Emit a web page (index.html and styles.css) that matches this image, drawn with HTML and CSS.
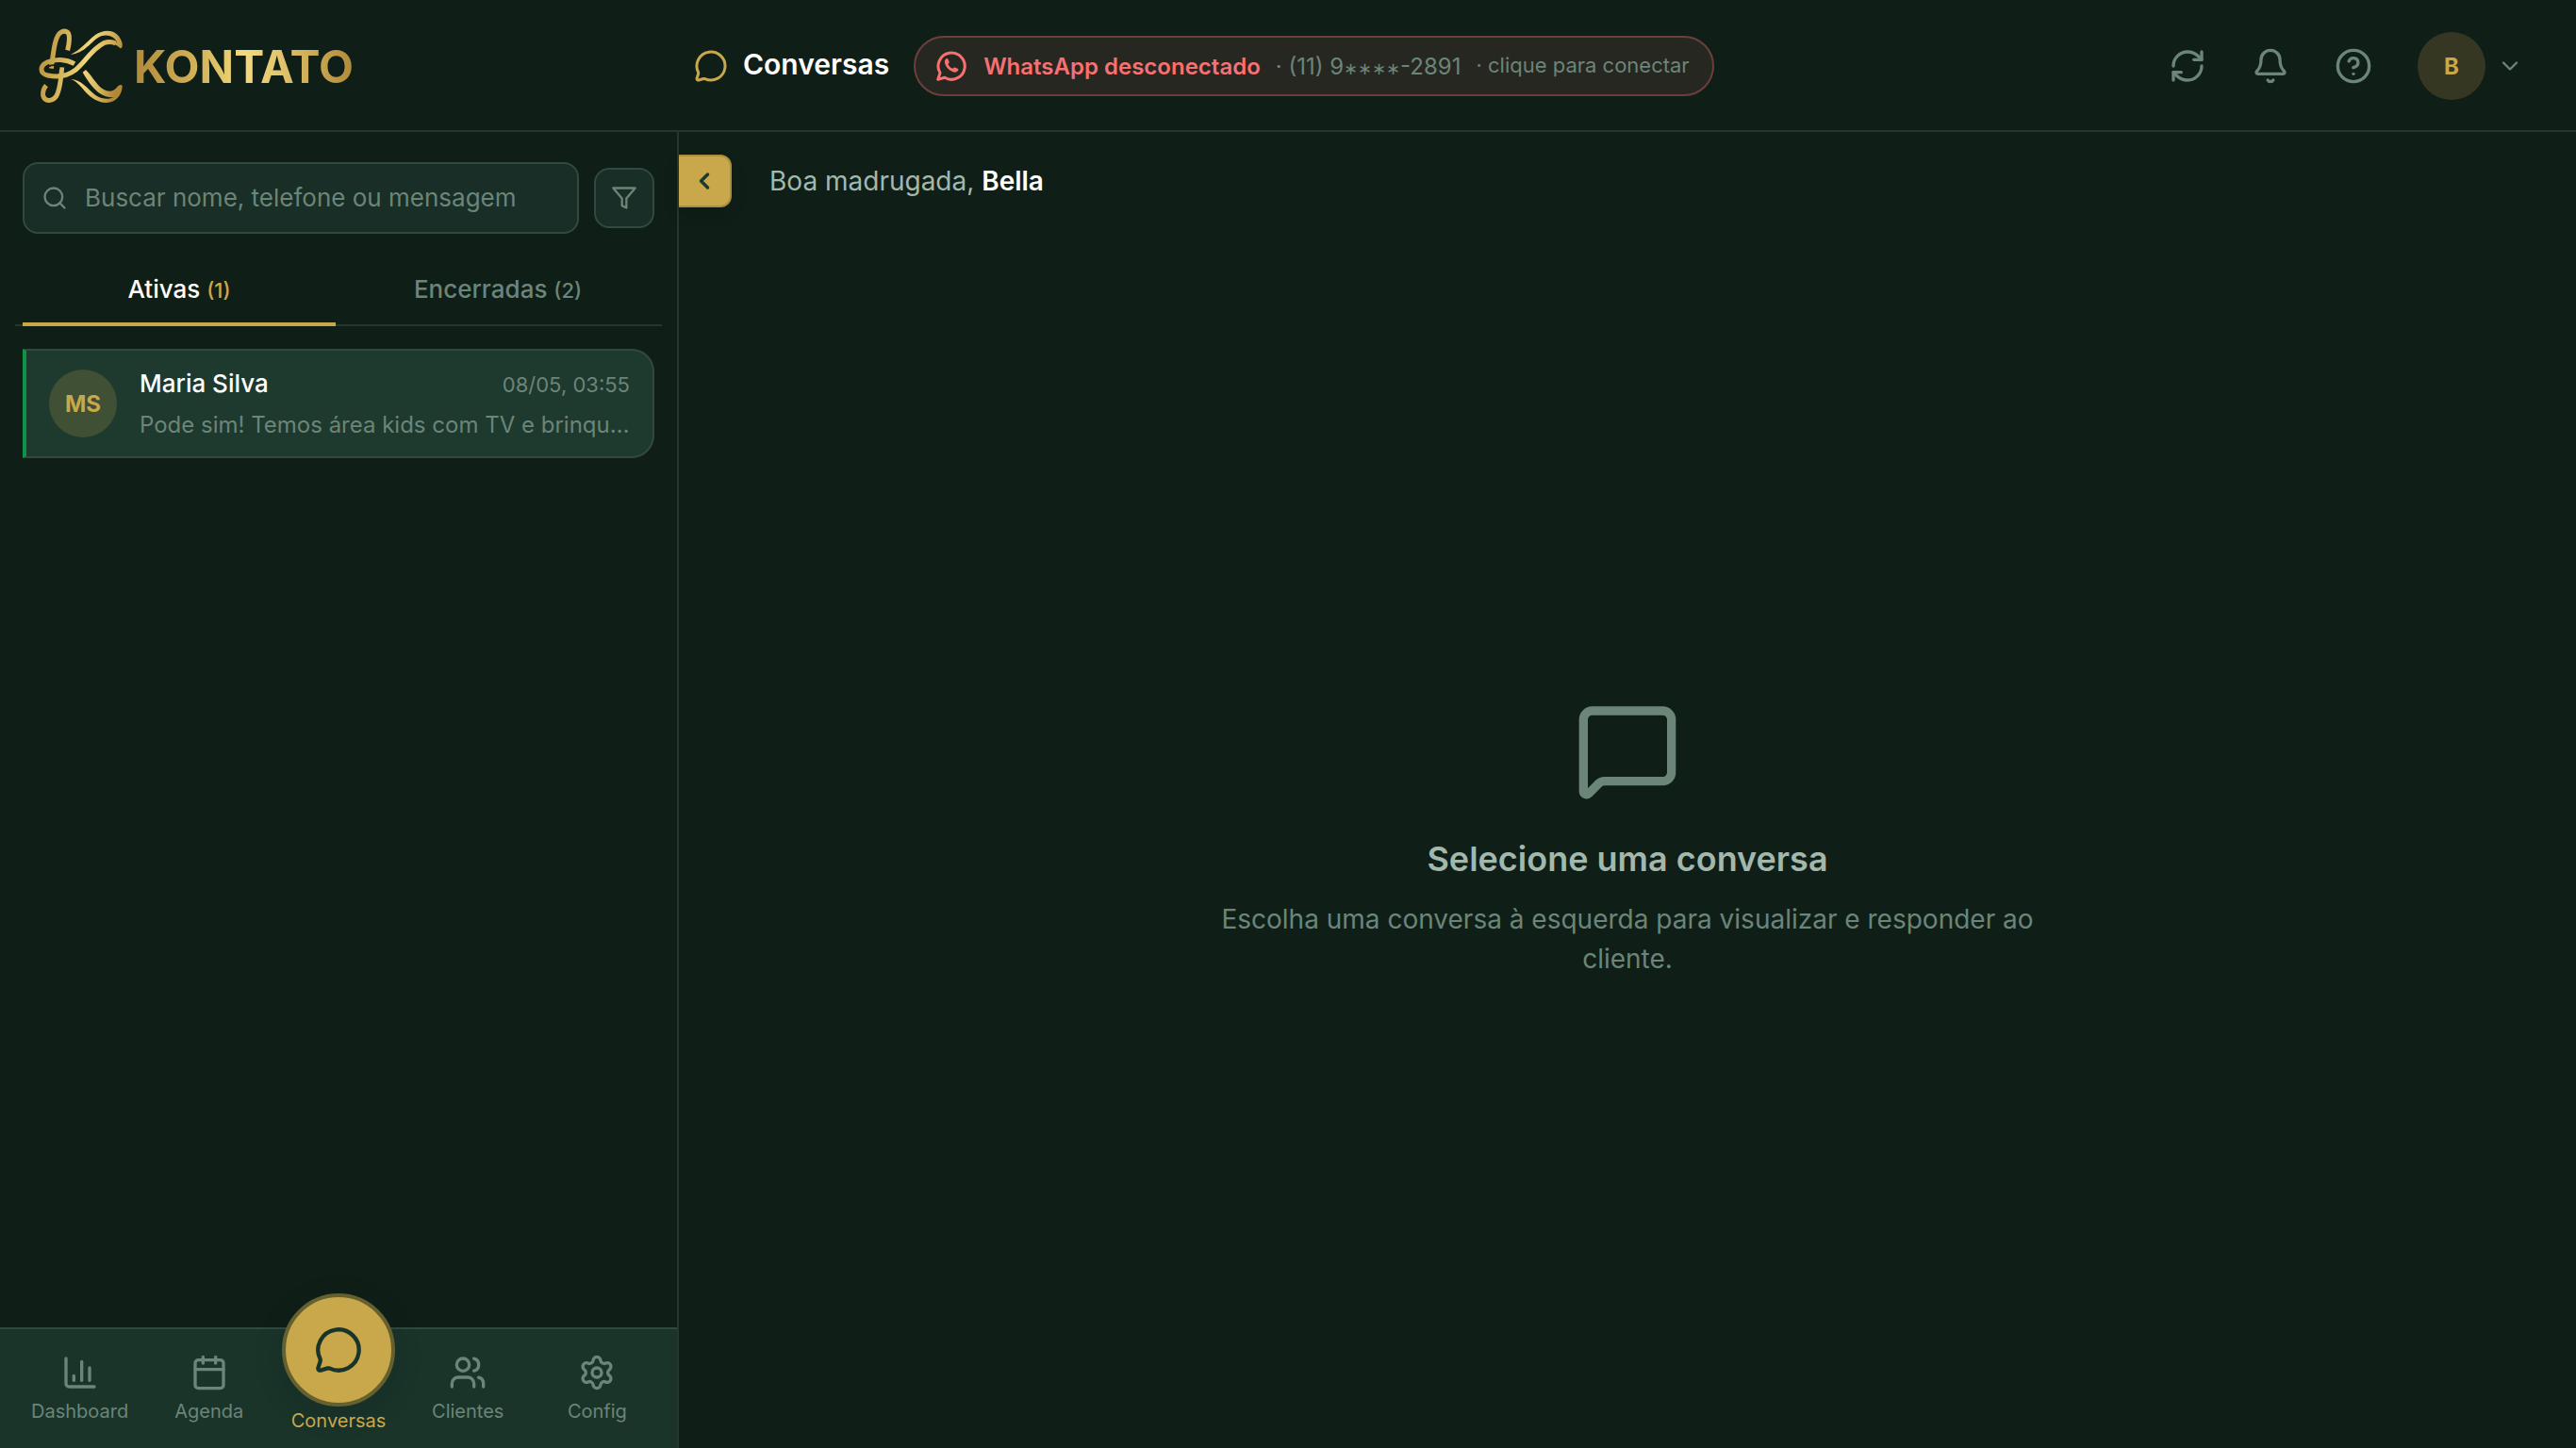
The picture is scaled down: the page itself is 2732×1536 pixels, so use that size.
FILE: index.html
```html
<!DOCTYPE html>
<html lang="pt-BR">
<head>
<meta charset="utf-8">
<meta name="viewport" content="width=device-width, initial-scale=1">
<title>Kontato · Conversas</title>
<link rel="stylesheet" href="styles.css">
</head>
<body>
<header class="topbar">
  <a class="brand" href="#" aria-label="Kontato">
    <svg class="brand-mark" viewBox="0 0 330 300" aria-hidden="true">
      <defs>
        <linearGradient id="gold" gradientUnits="userSpaceOnUse" x1="30" y1="60" x2="300" y2="120">
          <stop offset="0" stop-color="#b48c38"/>
          <stop offset=".3" stop-color="#d0ae54"/>
          <stop offset=".6" stop-color="#f0d67c"/>
          <stop offset=".8" stop-color="#d9b85e"/>
          <stop offset="1" stop-color="#b08838"/>
        </linearGradient>
      </defs>
      <g class="mark-stroke">
        <path d="M125 100C129 82 134 62 128 47Q120 35 105 42C84 52 80 105 73 158"/>
        <path d="M147 143C120 128 85 127 60 138C35 150 36 174 62 180C95 187 125 182 150 163C188 130 200 98 240 77Q262 69 278 78"/>
        <path d="M107 154C104 195 101 225 89 246C76 264 52 264 47 244Q45 226 57 212"/>
      </g>
      <g class="mark-fill">
        <path d="M134 114C168 99 187 71 212 52C245 29 287 33 299 78C300 88 298 94 293 94C281 83 268 77 252 76C262 72 274 73 283 76C274 54 246 45 222 60C196 77 180 108 134 114Z"/>
        <path d="M134 192C168 192 188 222 214 243C236 257 258 257 272 249C258 251 243 247 232 240C210 227 192 202 173 170L183 162C200 178 213 204 234 221C253 234 270 233 281 219C287 210 297 208 299 213C299 236 286 258 262 265C234 272 208 258 190 241C170 221 158 199 134 192Z"/>
      </g>
      <path class="mark-cut" d="M88 149C96 150 98 149 98 160M62 153C75 144 95 145 121 151"/>
    </svg>
    <span class="brand-name">KONTATO</span>
  </a>
  <div class="page-head">
    <h1 class="page-title">
      <svg class="icon icon-md" viewBox="0 0 24 24" aria-hidden="true"><path d="M2.992 16.342a2 2 0 0 1 .094 1.167l-1.065 3.29a1 1 0 0 0 1.236 1.168l3.413-.998a2 2 0 0 1 1.099.092 10 10 0 1 0-4.777-4.719"/></svg>
      <span class="page-name">Conversas</span>
    </h1>
    <button class="status" type="button">
      <svg class="icon icon-md" viewBox="0 0 24 24" aria-hidden="true"><path d="M2.500 21.500l1.500-4.600a9.400 9.400 0 1 1 3.300 3.300z"/><path class="solid" d="M8.300 6.900c.5-.4 1-.3 1.300.3l.8 1.700c.2.500.1.800-.3 1.200l-.5.500c.7 1.500 1.800 2.600 3.400 3.300l.6-.6c.4-.4.700-.4 1.200-.2l1.600.8c.6.300.7.800.3 1.300-.8 1.200-2.100 1.500-3.600 1-2.800-1-4.900-3.200-5.700-6-.300-1.300 0-2.500.9-3.300z"/></svg>
      <strong class="status-label">WhatsApp desconectado</strong>
      <span class="status-phone">· (11) 9<span class="mask">∗∗∗∗</span>-2891</span>
      <span class="status-hint">· clique para conectar</span>
    </button>
  </div>
  <div class="actions">
    <button class="icon-button" type="button" aria-label="Atualizar"><svg class="icon icon-lg" viewBox="0 0 24 24"><path d="M3 12a9 9 0 0 1 9-9 9.750 9.750 0 0 1 6.740 2.740L21 8"/><path d="M21 3v5h-5"/><path d="M21 12a9 9 0 0 1-9 9 9.750 9.750 0 0 1-6.740-2.740L3 16"/><path d="M8 16H3v5"/></svg></button>
    <button class="icon-button" type="button" aria-label="Notificações"><svg class="icon icon-lg" viewBox="0 0 24 24"><path d="M10.268 21a2 2 0 0 0 3.464 0"/><path d="M3.262 15.326A1 1 0 0 0 4 17h16a1 1 0 0 0 .74-1.673C19.41 13.956 18 12.499 18 8A6 6 0 0 0 6 8c0 4.499-1.411 5.956-2.738 7.326"/></svg></button>
    <button class="icon-button" type="button" aria-label="Ajuda"><svg class="icon icon-lg" viewBox="0 0 24 24"><circle cx="12" cy="12" r="10"/><path d="M9.090 9a3 3 0 0 1 5.830 1c0 2-3 3-3 3"/><path d="M12 17h.01"/></svg></button>
    <button class="account" type="button" aria-label="Conta de Bella">
      <span class="avatar avatar-user">B</span>
      <svg class="icon icon-sm" viewBox="0 0 24 24"><path d="m6 9 6 6 6-6"/></svg>
    </button>
  </div>
</header>

<div class="workspace">
  <aside class="sidebar">
    <div class="search-row">
      <label class="search">
        <svg class="icon icon-sm" viewBox="0 0 24 24" aria-hidden="true"><circle cx="11" cy="11" r="8"/><path d="m21 21-4.340-4.340"/></svg>
        <input class="search-input" type="search" placeholder="Buscar nome, telefone ou mensagem" aria-label="Buscar nome, telefone ou mensagem">
      </label>
      <button class="filter" type="button" aria-label="Filtrar"><svg class="icon icon-sm" viewBox="0 0 24 24"><path d="M22 3H2l8 9.460V19l4 2v-8.540z"/></svg></button>
    </div>
    <div class="tabs" role="tablist">
      <button class="tab tab-active" type="button" role="tab" aria-selected="true">Ativas <span class="count">(1)</span></button>
      <button class="tab" type="button" role="tab" aria-selected="false">Encerradas <span class="count">(2)</span></button>
    </div>
    <div class="list">
      <button class="chat" type="button">
        <span class="avatar avatar-chat">MS</span>
        <span class="chat-body">
          <span class="chat-top"><span class="chat-name">Maria Silva</span><time class="chat-time">08/05, 03:55</time></span>
          <span class="chat-preview">Pode sim! Temos área kids com TV e brinquedos</span>
        </span>
      </button>
    </div>
    <nav class="nav" aria-label="Principal">
      <a class="nav-item" href="#"><svg class="icon icon-lg" viewBox="0 0 24 24"><path d="M3 3v16a2 2 0 0 0 2 2h16"/><path d="M18 17V9"/><path d="M13 17V5"/><path d="M8 17v-3"/></svg><span>Dashboard</span></a>
      <a class="nav-item" href="#"><svg class="icon icon-lg" viewBox="0 0 24 24"><path d="M8 2v4"/><path d="M16 2v4"/><rect width="18" height="18" x="3" y="4" rx="2"/><path d="M3 10h18"/></svg><span>Agenda</span></a>
      <a class="nav-item nav-current" href="#" aria-current="page"><span class="nav-disc"><svg class="icon icon-xl" viewBox="0 0 24 24"><path d="M2.992 16.342a2 2 0 0 1 .094 1.167l-1.065 3.29a1 1 0 0 0 1.236 1.168l3.413-.998a2 2 0 0 1 1.099.092 10 10 0 1 0-4.777-4.719"/></svg></span><span>Conversas</span></a>
      <a class="nav-item" href="#"><svg class="icon icon-lg" viewBox="0 0 24 24"><path d="M16 21v-2a4 4 0 0 0-4-4H6a4 4 0 0 0-4 4v2"/><path d="M16 3.128a4 4 0 0 1 0 7.744"/><path d="M22 21v-2a4 4 0 0 0-3-3.870"/><circle cx="9" cy="7" r="4"/></svg><span>Clientes</span></a>
      <a class="nav-item" href="#"><svg class="icon icon-lg" viewBox="0 0 24 24"><path d="M9.671 4.136a2.34 2.34 0 0 1 4.659 0 2.34 2.34 0 0 0 3.319 1.915 2.34 2.34 0 0 1 2.33 4.033 2.34 2.34 0 0 0 0 3.831 2.34 2.34 0 0 1-2.33 4.033 2.34 2.34 0 0 0-3.319 1.915 2.34 2.34 0 0 1-4.659 0 2.34 2.34 0 0 0-3.32-1.915 2.34 2.34 0 0 1-2.33-4.033 2.34 2.34 0 0 0 0-3.831A2.34 2.34 0 0 1 6.35 6.051a2.34 2.34 0 0 0 3.319-1.915"/><circle cx="12" cy="12" r="3"/></svg><span>Config</span></a>
    </nav>
  </aside>

  <main class="main">
    <div class="greeting-row">
      <button class="collapse" type="button" aria-label="Recolher painel"><svg class="icon icon-sm" viewBox="0 0 24 24"><path d="m15 18-6-6 6-6"/></svg></button>
      <p class="greeting">Boa madrugada, <strong class="greeting-name">Bella</strong></p>
    </div>
    <section class="empty">
      <svg class="icon empty-icon" viewBox="0 0 24 24" aria-hidden="true"><path d="M22 17a2 2 0 0 1-2 2H6.828a2 2 0 0 0-1.414.586l-2.202 2.202A.71.71 0 0 1 2 21.286V5a2 2 0 0 1 2-2h16a2 2 0 0 1 2 2z"/></svg>
      <h2 class="empty-title">Selecione uma conversa</h2>
      <p class="empty-text">Escolha uma conversa à esquerda para visualizar e responder ao cliente.</p>
    </section>
  </main>
</div>
</body>
</html>
```
FILE: styles.css
```css
:root {
  --bg: #101e18;
  --panel: #1a342a;
  --card: #1e392e;
  --field: #182e27;
  --line: #26372f;
  --edge: #31493f;
  --gold: #c8a84b;
  --muted: #6b8578;
  --soft: #a3b8ac;
  --red: #f87171;
}

* { box-sizing: border-box; }

body {
  margin: 0;
  min-height: 100vh;
  display: flex;
  flex-direction: column;
  background: var(--bg);
  color: #fff;
  font-family: Inter, "Liberation Sans", sans-serif;
  font-size: 28px;
}

button, input { font: inherit; color: inherit; }
button { margin: 0; padding: 0; border: 0; background: none; cursor: pointer; }
a { color: inherit; text-decoration: none; }

.icon {
  flex: none;
  fill: none;
  stroke: currentColor;
  stroke-width: 2;
  stroke-linecap: round;
  stroke-linejoin: round;
}
.icon-sm { width: 28px; height: 28px; }
.icon-md { width: 36px; height: 36px; }
.icon-lg { width: 40px; height: 40px; }
.icon-xl { width: 52px; height: 52px; }
.solid { fill: currentColor; stroke: none; }

/* Top bar */
.topbar {
  display: flex;
  align-items: center;
  height: 140px;
  padding-top: 2px;
  border-bottom: 2px solid var(--line);
}
.brand {
  flex: none;
  width: 736px;
  padding-left: 30px;
  display: flex;
  align-items: center;
  gap: 2px;
}
.brand-mark { width: 110px; height: 100px; }
.mark-stroke { fill: none; stroke: url(#gold); stroke-width: 15; }
.mark-fill { fill: url(#gold); }
.mark-cut { fill: none; stroke: var(--bg); stroke-width: 5; }
.brand-name {
  background: linear-gradient(90deg, #b18a38, #d4b45a 30%, #f2d97f 50%, #e3c76e 65%, #b18a38);
  background-clip: text;
  color: transparent;
  font-size: 48px;
  font-weight: 700;
}
.page-head { display: flex; align-items: center; gap: 26px; }
.page-title {
  margin: 0;
  display: flex;
  align-items: center;
  gap: 16px;
  font-size: 30px;
  font-weight: 600;
}
.page-name { padding-bottom: 4px; }
.page-title .icon { color: var(--gold); }
.status {
  display: flex;
  align-items: center;
  height: 64px;
  padding: 0 24px 0 20px;
  gap: 16px;
  border: 2px solid #6b403a;
  border-radius: 32px;
  background: #272722;
  color: var(--muted);
  font-size: 24px;
}
.status .icon, .status-label { color: var(--red); }
.status-label { font-weight: 600; }
.mask { font-size: 18px; }
.status-hint { padding-bottom: 2px; font-size: 22px; }
.actions {
  margin-left: auto;
  padding-right: 56px;
  display: flex;
  align-items: center;
  gap: 48px;
  color: var(--muted);
}
.icon-button { display: flex; }
.account { display: flex; align-items: center; gap: 12px; }
.avatar {
  flex: none;
  width: 72px;
  height: 72px;
  border-radius: 50%;
  display: grid;
  place-items: center;
  color: var(--gold);
  font-size: 24px;
  font-weight: 700;
}
.avatar-user { background: #363723; }
.avatar-chat { background: #405034; }

/* Sidebar */
.workspace { flex: 1; display: flex; }
.sidebar {
  flex: none;
  width: 720px;
  display: flex;
  flex-direction: column;
  border-right: 2px solid var(--line);
}
.search-row {
  display: flex;
  align-items: center;
  gap: 16px;
  padding: 32px 24px 0;
}
.search {
  flex: 1;
  display: flex;
  align-items: center;
  gap: 18px;
  height: 76px;
  padding: 0 18px;
  border: 2px solid var(--edge);
  border-radius: 16px;
  background: var(--field);
  color: var(--muted);
}
.search-input {
  flex: 1;
  min-width: 0;
  padding: 0 0 2px;
  border: 0;
  outline: 0;
  background: none;
  font-size: 26px;
}
.search-input::placeholder { color: var(--muted); opacity: 1; }
.filter {
  width: 64px;
  height: 64px;
  display: grid;
  place-items: center;
  border: 2px solid var(--edge);
  border-radius: 16px;
  background: var(--field);
  color: var(--muted);
}
.tabs {
  display: flex;
  gap: 6px;
  margin: 20px 16px 0;
  padding: 0 8px;
  border-bottom: 2px solid var(--line);
}
.tab {
  flex: 1;
  height: 78px;
  margin-bottom: -2px;
  padding-top: 2px;
  border-bottom: 4px solid transparent;
  color: var(--muted);
  font-size: 26px;
  font-weight: 500;
}
.tab-active { border-color: var(--gold); color: #fff; }
.count { font-size: 22px; }
.tab-active .count { color: var(--gold); }

.list { flex: 1; padding: 24px; }
.chat {
  width: 100%;
  height: 116px;
  padding: 0 24px;
  display: flex;
  align-items: center;
  gap: 24px;
  border: 2px solid var(--edge);
  border-left: 4px solid #0f9347;
  border-radius: 0 24px 24px 0;
  background: var(--card);
  text-align: left;
}
.chat-body { flex: 1; min-width: 0; display: flex; flex-direction: column; gap: 6px; }
.chat-top { display: flex; align-items: baseline; justify-content: space-between; line-height: 38px; }
.chat-name { font-size: 26px; font-weight: 500; }
.chat-time { color: var(--muted); font-size: 22px; }
.chat-preview {
  overflow: hidden;
  color: var(--muted);
  font-size: 24px;
  line-height: 36px;
  text-overflow: ellipsis;
  white-space: nowrap;
}

.nav {
  display: flex;
  height: 128px;
  padding: 0 16px;
  border-top: 2px solid var(--edge);
  background: var(--panel);
  color: var(--muted);
  font-size: 20px;
  line-height: 28px;
}
.nav-item {
  flex: 1 1 0;
  min-width: 0;
  padding-top: 26px;
  display: flex;
  flex-direction: column;
  align-items: center;
  gap: 7px;
}
.nav-current {
  margin-top: -38px;
  padding-top: 0;
  gap: 1px;
  color: var(--gold);
}
.nav-disc {
  flex: none;
  width: 120px;
  height: 120px;
  display: grid;
  place-items: center;
  border: 4px solid #64602f;
  border-radius: 50%;
  background: var(--gold);
  color: var(--panel);
  box-shadow: 0 8px 32px rgba(0, 0, 0, .12);
}

/* Main */
.main { flex: 1; display: flex; flex-direction: column; }
.greeting-row {
  display: flex;
  align-items: center;
  gap: 40px;
  padding-top: 24px;
}
.collapse {
  width: 56px;
  height: 56px;
  display: grid;
  place-items: center;
  border: 2px solid #a98f40;
  border-left: 0;
  border-radius: 0 12px 12px 0;
  background: var(--gold);
  color: #1a3a2e;
  box-shadow: 0 8px 16px rgba(0, 0, 0, .12);
}
.collapse .icon { stroke-width: 3; }
.greeting { margin: 0; color: var(--soft); }
.greeting-name { color: #fff; font-weight: 600; }
.empty {
  flex: 1;
  display: flex;
  flex-direction: column;
  align-items: center;
  justify-content: center;
  padding-top: 22px;
  text-align: center;
}
.empty-icon { width: 112px; height: 112px; color: var(--muted); }
.empty-title {
  margin: 32px 0 16px;
  color: var(--soft);
  font-size: 36px;
  font-weight: 600;
  line-height: 54px;
}
.empty-text {
  max-width: 880px;
  margin: 0;
  color: var(--muted);
  font-size: 28px;
  line-height: 42px;
}
```
